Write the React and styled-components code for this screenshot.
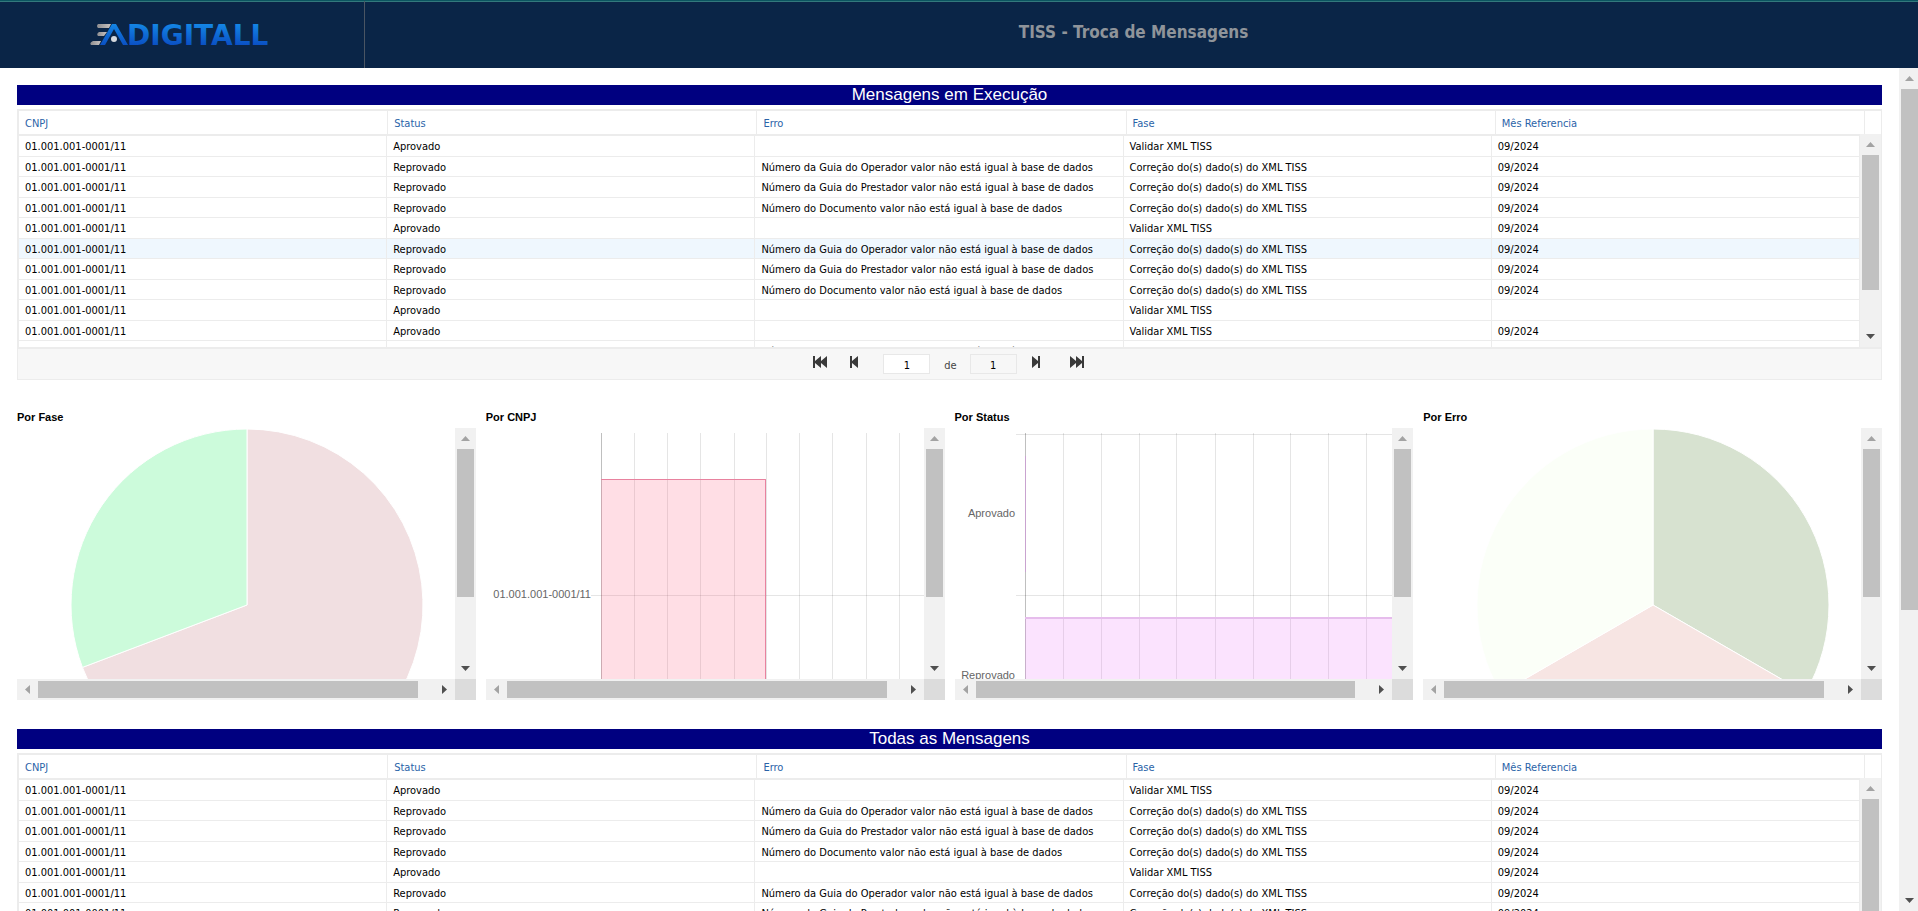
import React from 'react';
import styled, { createGlobalStyle } from 'styled-components';

const GlobalStyle = createGlobalStyle`
  * {
    box-sizing: border-box;
  }

  body {
    margin: 0;
    background-color: #ffffff;
    color: #000000;
    font-family: 'DejaVu Sans Condensed', 'DejaVu Sans', sans-serif;
    font-size: 11px;
  }
`;

const Page = styled.div`
  display: flex;
  flex-direction: column;
  height: 100vh;
  overflow: hidden;
`;

const Header = styled.header`
  display: flex;
  flex: none;
  height: 68px;
  background-color: #0a2547;
  border-top: 1px solid #0b5560;
  box-shadow: inset 0 1px 0 #33797c;
`;

const Brand = styled.div`
  display: flex;
  align-items: center;
  width: 365px;
  padding: 0 0 2px 88px;
  border-right: 1px solid #4a5563;
`;

const PageTitle = styled.h1`
  display: flex;
  flex: 1;
  align-items: center;
  justify-content: center;
  margin: 0;
  padding: 0 16px 5px 0;
  color: #8f949a;
  font-size: 17px;
  font-weight: bold;
  line-height: 20px;
`;

const Body = styled.div`
  display: flex;
  flex: 1;
  min-height: 0;
`;

const Content = styled.main`
  flex: 1;
  min-width: 0;
  padding: 17px 17px 0;
  overflow: hidden;
`;

const PageScroll = styled.div`
  display: flex;
  flex: none;
  width: 19px;
  overflow: hidden;
`;

const SectionTitle = styled.h2`
  margin: 0 0 4px;
  height: 20px;
  background-color: #000080;
  color: #ffffff;
  font-family: 'Liberation Sans', Arial, sans-serif;
  font-size: 17px;
  font-weight: normal;
  line-height: 19px;
  text-align: center;
`;

const GridBox = styled.div`
  border: 1px solid #ececec;
`;

const Table = styled.table`
  width: 100%;
  border-collapse: separate;
  border-spacing: 0;
  table-layout: fixed;
`;

const HeadWrap = styled.div`
  padding-right: 16px;
  border-left: 1px solid #ececec;
  border-top: 1px solid #ececec;
`;

const HeadCell = styled.th`
  height: 23px;
  padding: 2px 6px 0;
  border-right: 1px solid #ececec;
  color: #2a63a8;
  font-weight: normal;
  text-align: left;
`;

const Rows = styled.div`
  display: flex;
  height: 215px;
  overflow: hidden;
  border-bottom: 2px solid #ececec;
`;

const RowsView = styled.div`
  flex: 1;
  min-width: 0;
  overflow: hidden;
  border-left: 1px solid #ececec;
  border-top: 2px solid #ececec;
`;

const Row = styled.tr`
  height: 21px;
  background-color: ${({ $active }) => ($active ? '#eff7fe' : '#ffffff')};

  &:nth-child(even) {
    height: 20px;
  }
`;

const Cell = styled.td`
  padding: 2px 6px 0;
  border-right: 1px solid #ececec;
  border-bottom: 1px solid #ececec;
  line-height: 16px;
  white-space: nowrap;
  overflow: hidden;
`;

const Pager = styled.div`
  display: flex;
  align-items: center;
  justify-content: center;
  height: 30px;
  padding-right: 2px;
  background-color: #f7f7f7;
`;

const PagerButton = styled.button`
  display: flex;
  align-items: center;
  justify-content: center;
  width: 34px;
  height: 24px;
  margin: 0 0 4px ${({ $before = 0 }) => $before}px;
  padding: 0;
  border: none;
  background: none;
  color: #3a3a3a;
  cursor: pointer;
`;

const PageInput = styled.input`
  width: 47px;
  height: 20px;
  margin: 0 ${({ $after }) => $after}px 0 ${({ $before }) => $before}px;
  padding: 2px 0 0;
  border: 1px solid #e8e8e8;
  background-color: ${({ readOnly }) => (readOnly ? '#f7f7f7' : '#ffffff')};
  color: #000000;
  font-family: inherit;
  font-size: 11px;
  text-align: center;
`;

const PagerText = styled.span`
  padding-top: 2px;
  color: #444444;
`;

const Charts = styled.section`
  display: grid;
  grid-template-columns: repeat(4, 1fr);
  column-gap: 10px;
  margin: 29px 0;
`;

const ChartTitle = styled.h3`
  margin: 0;
  height: 19px;
  font-family: 'Liberation Sans', Arial, sans-serif;
  font-size: 11px;
  font-weight: bold;
  line-height: 16px;
`;

const ChartFrame = styled.div`
  display: grid;
  grid-template-columns: 1fr 21px;
  grid-template-rows: 251px 21px;
`;

const ChartView = styled.div`
  min-width: 0;
  overflow: hidden;
`;

const Drawing = styled.svg`
  display: block;

  text {
    fill: #666666;
    font-family: 'Liberation Sans', Arial, sans-serif;
    font-size: 11px;
  }
`;

const Corner = styled.div`
  background-color: #dcdcdc;
`;

const Track = styled.div`
  display: flex;
  flex: none;
  flex-direction: ${({ $horizontal }) => ($horizontal ? 'row' : 'column')};
  ${({ $horizontal }) => ($horizontal ? 'height: 21px;' : 'width: 21px;')}
  background-color: #f1f1f1;
`;

const Arrow = styled.button`
  display: flex;
  flex: none;
  align-items: center;
  justify-content: center;
  width: 21px;
  height: 21px;
  padding: 0;
  border: none;
  background: none;
  color: ${({ $dim }) => ($dim ? '#a3a3a3' : '#505050')};
`;

const Lane = styled.div`
  display: flex;
  flex: 1;
  min-height: 0;
  flex-direction: ${({ $horizontal }) => ($horizontal ? 'row' : 'column')};
  padding: ${({ $horizontal }) => ($horizontal ? '2px 0' : '0 2px')};
`;

const Thumb = styled.div`
  flex: 0 0 ${({ $size }) => $size}%;
  background-color: #c1c1c1;
`;

const arrowPaths = {
  up: 'M0 7 L4.5 2 L9 7 Z',
  down: 'M0 2 L4.5 7 L9 2 Z',
  left: 'M7 0 L2 4.5 L7 9 Z',
  right: 'M2 0 L7 4.5 L2 9 Z',
};

const ArrowIcon = ({ direction }) => (
  <svg width="9" height="9" viewBox="0 0 9 9" fill="currentColor">
    <path d={arrowPaths[direction]} />
  </svg>
);

const ScrollBar = ({ horizontal = false, size }) => (
  <Track $horizontal={horizontal}>
    <Arrow type="button" $dim aria-label={horizontal ? 'Esquerda' : 'Acima'}>
      <ArrowIcon direction={horizontal ? 'left' : 'up'} />
    </Arrow>
    <Lane $horizontal={horizontal}>
      <Thumb $size={size} />
    </Lane>
    <Arrow type="button" aria-label={horizontal ? 'Direita' : 'Abaixo'}>
      <ArrowIcon direction={horizontal ? 'right' : 'down'} />
    </Arrow>
  </Track>
);

const Logo = () => (
  <svg width="200" height="40" viewBox="0 -6 200 40" role="img" aria-label="ADIGITALL">
    <defs>
      <linearGradient id="blue" gradientUnits="userSpaceOnUse" x1="0" y1="3" x2="0" y2="25">
        <stop offset="0" stopColor="#1488e6" />
        <stop offset="1" stopColor="#0a50c4" />
      </linearGradient>
      <linearGradient id="silver" x1="0" y1="0" x2="1" y2="0">
        <stop offset="0" stopColor="#8d8d90" />
        <stop offset="1" stopColor="#c9c3c0" />
      </linearGradient>
    </defs>
    <path d="M10 4 H23 L21 8 H10 Q8 6 10 4 Z" fill="url(#silver)" />
    <path d="M11 12 H19 L16 16 H10 Q8 14 11 12 Z" fill="url(#silver)" />
    <path d="M5 21 H13 L11 25 H3 Q1 23 5 21 Z" fill="url(#silver)" />
    <path d="M12 25 L24 4 H28 L40 25 H35 L26 9 L17 25 Z" fill="url(#blue)" />
    <circle cx="26" cy="19" r="3" fill="#d5d8dc" />
    <text
      x="39"
      y="25"
      fill="url(#blue)"
      fontFamily="DejaVu Sans, sans-serif"
      fontSize="28"
      fontWeight="bold"
    >
      DIGITALL
    </text>
  </svg>
);

const pagerPaths = {
  first: 'M0 0 H2 V5 L8 0 V5 L14 0 V12 L8 7 V12 L2 7 V12 H0 Z',
  prev: 'M0 0 H2 V5 L8 0 V12 L2 7 V12 H0 Z',
  next: 'M8 0 H6 V5 L0 0 V12 L6 7 V12 H8 Z',
  last: 'M14 0 H12 V5 L6 0 V5 L0 0 V12 L6 7 V12 L12 7 V12 H14 Z',
};

const PagerIcon = ({ name }) => {
  const width = name === 'first' || name === 'last' ? 14 : 8;
  return (
    <svg width={width} height="12" viewBox={`0 0 ${width} 12`} fill="currentColor">
      <path d={pagerPaths[name]} />
    </svg>
  );
};

const columns = ['CNPJ', 'Status', 'Erro', 'Fase', 'Mês Referencia'];

const CNPJ = '01.001.001-0001/11';
const OPERADOR = 'Número da Guia do Operador valor não está igual à base de dados';
const PRESTADOR = 'Número da Guia do Prestador valor não está igual à base de dados';
const DOCUMENTO = 'Número do Documento valor não está igual à base de dados';

const approved = (month = '09/2024') => [CNPJ, 'Aprovado', '', 'Validar XML TISS', month];
const rejected = (error) => [CNPJ, 'Reprovado', error, 'Correção do(s) dado(s) do XML TISS', '09/2024'];

const messages = [
  approved(),
  rejected(OPERADOR),
  rejected(PRESTADOR),
  rejected(DOCUMENTO),
  approved(),
  rejected(OPERADOR),
  rejected(PRESTADOR),
  rejected(DOCUMENTO),
  approved(''),
  approved(),
  rejected(OPERADOR),
];

const MessageGrid = ({ title, activeRow }) => (
  <section>
    <SectionTitle>{title}</SectionTitle>
    <GridBox>
      <HeadWrap>
        <Table aria-label={`${title} - colunas`}>
          <thead>
            <tr>
              {columns.map((column) => (
                <HeadCell key={column} scope="col">{column}</HeadCell>
              ))}
            </tr>
          </thead>
        </Table>
      </HeadWrap>
      <Rows>
        <RowsView>
          <Table aria-label={title}>
            <tbody>
              {messages.map((message, index) => (
                <Row key={index} $active={index === activeRow}>
                  {message.map((value, cell) => (
                    <Cell key={cell}>{value}</Cell>
                  ))}
                </Row>
              ))}
            </tbody>
          </Table>
        </RowsView>
        <ScrollBar size={79} />
      </Rows>
      <Pager>
        <PagerButton type="button" aria-label="Primeira página"><PagerIcon name="first" /></PagerButton>
        <PagerButton type="button" aria-label="Página anterior"><PagerIcon name="prev" /></PagerButton>
        <PageInput aria-label="Página" defaultValue="1" $before={12} $after={14} />
        <PagerText>de</PagerText>
        <PageInput aria-label="Total de páginas" value="1" readOnly $before={13} $after={2} />
        <PagerButton type="button" aria-label="Próxima página"><PagerIcon name="next" /></PagerButton>
        <PagerButton type="button" aria-label="Última página" $before={7}><PagerIcon name="last" /></PagerButton>
      </Pager>
    </GridBox>
  </section>
);

const ChartPanel = ({ title, children }) => (
  <div>
    <ChartTitle>{title}</ChartTitle>
    <ChartFrame>
      <ChartView>
        <Drawing width="560" height="420" role="img" aria-label={title}>
          {children}
        </Drawing>
      </ChartView>
      <ScrollBar size={71} />
      <ScrollBar horizontal size={96} />
      <Corner />
    </ChartFrame>
  </div>
);

const CX = 230;
const CY = 177;
const RADIUS = 176;

const pointAt = (share) => {
  const angle = share * 2 * Math.PI;
  return `${CX + RADIUS * Math.sin(angle)} ${CY - RADIUS * Math.cos(angle)}`;
};

const Pie = ({ slices }) => {
  const total = slices.reduce((sum, slice) => sum + slice.value, 0);
  let start = 0;

  return slices.map(({ value, color }) => {
    const end = start + value / total;
    const large = end - start > 0.5 ? 1 : 0;
    const d = `M${CX} ${CY} L${pointAt(start)} A${RADIUS} ${RADIUS} 0 ${large} 1 ${pointAt(end)} Z`;
    start = end;
    return <path key={color} d={d} fill={color} stroke="#ffffff" />;
  });
};

const phases = [
  { value: 9, color: '#f1dfe1' },
  { value: 4, color: '#ccfbdb' },
];

const errors = [
  { value: 3, color: '#d7e2d0' },
  { value: 3, color: '#f7e5e3' },
  { value: 3, color: '#fbfff8' },
];

// first tick is the axis itself, so it is drawn darker
const Ticks = ({ at }) =>
  at.map((x, index) => (
    <rect key={x} x={x} y="5" width="1" height="415" fill={index === 0 ? '#00000040' : '#0000001a'} />
  ));

const CnpjChart = () => (
  <>
    <Ticks at={[115, 148, 181, 214, 248, 280, 313, 346, 380, 413]} />
    <rect x="105" y="167" width="455" height="1" fill="#0000001a" />
    <rect x="115" y="51" width="165" height="369" fill="#ff638436" />
    <rect x="115" y="51" width="165" height="1" fill="#e8829f" />
    <rect x="279" y="51" width="1" height="369" fill="#e8829f" />
    <text x="105" y="170" textAnchor="end">{CNPJ}</text>
  </>
);

const StatusChart = () => (
  <>
    <Ticks at={[70, 108, 146, 184, 221, 260, 298, 335, 373, 411]} />
    <rect x="61" y="6" width="499" height="1" fill="#0000001a" />
    <rect x="61" y="167" width="499" height="1" fill="#0000001a" />
    <rect x="70" y="28" width="1" height="116" fill="#c9a3d0" />
    <rect x="70" y="189" width="490" height="231" fill="#ec7cf836" />
    <rect x="70" y="189" width="490" height="2" fill="#e6bdec" />
    <text x="60" y="89" textAnchor="end">Aprovado</text>
    <text x="60" y="251" textAnchor="end">Reprovado</text>
  </>
);

const App = () => (
  <>
    <GlobalStyle />
    <Page>
      <Header>
        <Brand>
          <Logo />
        </Brand>
        <PageTitle>TISS - Troca de Mensagens</PageTitle>
      </Header>
      <Body>
        <Content>
          <MessageGrid title="Mensagens em Execução" activeRow={5} />
          <Charts>
            <ChartPanel title="Por Fase"><Pie slices={phases} /></ChartPanel>
            <ChartPanel title="Por CNPJ"><CnpjChart /></ChartPanel>
            <ChartPanel title="Por Status"><StatusChart /></ChartPanel>
            <ChartPanel title="Por Erro"><Pie slices={errors} /></ChartPanel>
          </Charts>
          <MessageGrid title="Todas as Mensagens" />
        </Content>
        <PageScroll>
          <ScrollBar size={65} />
        </PageScroll>
      </Body>
    </Page>
  </>
);

export default App;
